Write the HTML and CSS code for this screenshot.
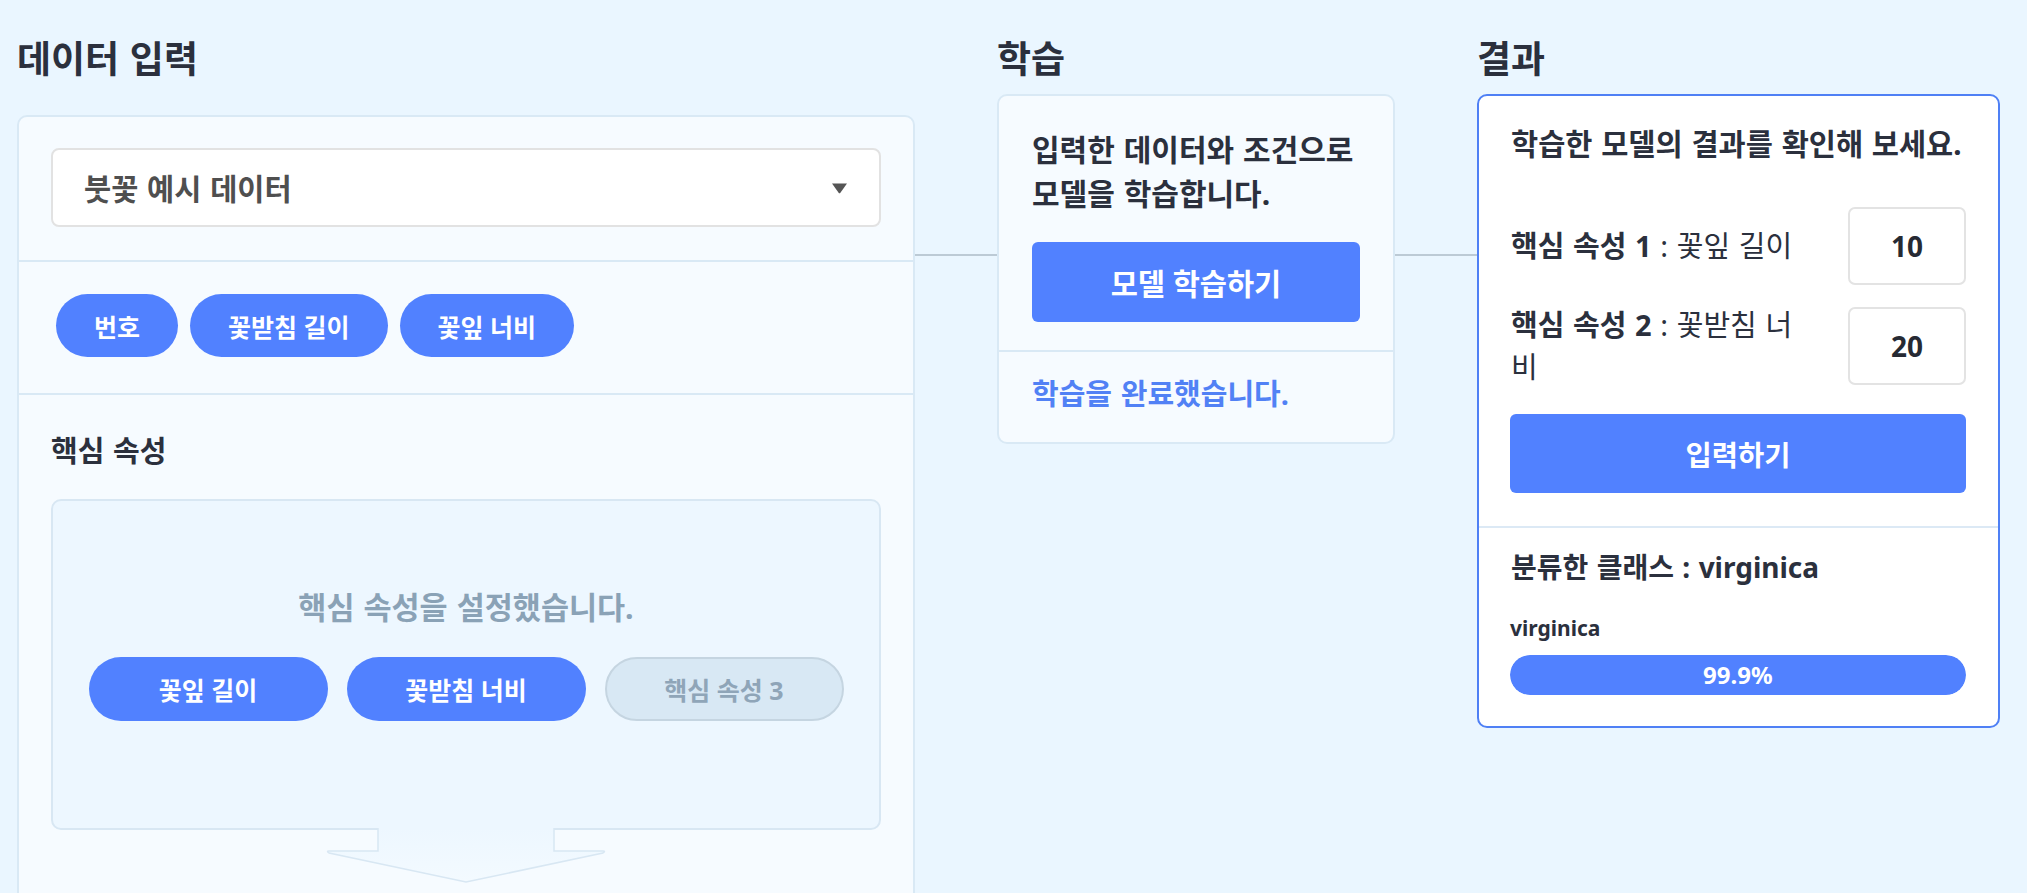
FILE: index.html
```html
<!DOCTYPE html>
<html lang="ko">
<head>
    <meta charset="UTF-8">
    <meta name="viewport" content="width=device-width, initial-scale=1.0">
    <title>붓꽃 분류 학습</title>
    <link rel="stylesheet" href="styles.css">
</head>
<body>
    <div class="page">
        <section class="column column-input">
            <h2 class="column-title">데이터 입력</h2>
            <div class="card input-card">
                <div class="card-section">
                    <div class="select-box">
                        <span>붓꽃 예시 데이터</span>
                        <svg class="select-arrow" width="17" height="12" viewBox="0 0 17 12">
                            <path d="M1 1.5h15l-6.6 9.2q-0.9 1.1-1.8 0z" fill="#555"/>
                        </svg>
                    </div>
                </div>
                <div class="card-section chip-section">
                    <div class="chip-row">
                        <button class="chip">번호</button>
                        <button class="chip">꽃받침 길이</button>
                        <button class="chip">꽃잎 너비</button>
                    </div>
                </div>
                <div class="card-section feature-section">
                    <h3 class="section-title">핵심 속성</h3>
                    <div class="feature-box">
                        <p class="feature-note">핵심 속성을 설정했습니다.</p>
                        <div class="feature-row">
                            <button class="feature-btn">꽃잎 길이</button>
                            <button class="feature-btn">꽃받침 너비</button>
                            <button class="feature-btn empty">핵심 속성 3</button>
                        </div>
                    </div>
                    <svg class="flow-arrow" width="282" height="56" viewBox="0 0 282 56">
                        <defs>
                            <linearGradient id="arrowFill" x1="0" y1="0" x2="0" y2="1">
                                <stop offset="0" stop-color="#edf7ff"/>
                                <stop offset="1" stop-color="#f3faff"/>
                            </linearGradient>
                        </defs>
                        <path d="M53 0V23H4Q1 23 4 25L141 54L278 25Q281 23 278 23H229V0Z" fill="url(#arrowFill)"/>
                        <path d="M53 0V23H4Q1 23 4 25L141 54L278 25Q281 23 278 23H229V0" fill="none" stroke="#d8e7f3" stroke-width="1.5"/>
                    </svg>
                </div>
            </div>
        </section>

        <div class="connector"></div>

        <section class="column column-train">
            <h2 class="column-title">학습</h2>
            <div class="card train-card">
                <div class="card-section">
                    <p class="train-text">입력한 데이터와 조건으로 모델을 학습합니다.</p>
                    <button class="main-btn">모델 학습하기</button>
                </div>
                <div class="card-section done-section">
                    <p class="done-text">학습을 완료했습니다.</p>
                </div>
            </div>
        </section>

        <div class="connector"></div>

        <section class="column column-result">
            <h2 class="column-title">결과</h2>
            <div class="card result-card">
                <div class="card-section result-top">
                    <p class="result-text">학습한 모델의 결과를 확인해 보세요.</p>
                    <div class="value-row">
                        <div class="value-label"><b>핵심 속성 1</b> : 꽃잎 길이</div>
                        <div class="value-input">10</div>
                    </div>
                    <div class="value-row">
                        <div class="value-label"><b>핵심 속성 2</b> : 꽃받침 너<span>비</span></div>
                        <div class="value-input">20</div>
                    </div>
                    <button class="main-btn submit-btn">입력하기</button>
                </div>
                <div class="card-section result-bottom">
                    <h3 class="class-title">분류한 클래스 : virginica</h3>
                    <div class="prob-label">virginica</div>
                    <div class="prob-bar">
                        <div class="prob-fill" style="width: 99.9%">99.9%</div>
                    </div>
                </div>
            </div>
        </section>
    </div>
</body>
</html>
```

FILE: styles.css
```css
* {
    box-sizing: border-box;
}
html, body {
    margin: 0;
    height: 100%;
    overflow: hidden;
}
body {
    font-family: "Noto Sans", "Noto Sans CJK KR", sans-serif;
    background-color: #eaf6ff;
    color: #2b303d;
    word-spacing: 0.07em;
}
p, h2, h3 {
    margin: 0;
}
button {
    font-family: inherit;
    border: none;
    cursor: pointer;
}
.page {
    display: flex;
    align-items: flex-start;
    height: 100vh;
    overflow: hidden;
    padding: 35px 27px 0 17px;
}
.column-input {
    width: 898px;
}
.column-train {
    width: 398px;
}
.column-result {
    width: 523px;
}
.column-title {
    font-size: 37px;
    line-height: 48px;
    font-weight: bold;
    margin-bottom: 11px;
}
.column-input .column-title {
    margin-bottom: 32px;
}
.connector {
    width: 82px;
    height: 2px;
    margin-top: 219px;
    background-color: #bccad5;
}
.card {
    background-color: #f6fbff;
    border: 2px solid #d9e9f5;
    border-radius: 10px;
}
.card-section + .card-section {
    border-top: 2px solid #d9e9f5;
}

/* data input */
.input-card .card-section {
    padding: 31px 32px 33px;
}
.select-box {
    display: flex;
    align-items: center;
    justify-content: space-between;
    height: 79px;
    padding: 0 31px;
    background-color: #fff;
    border: 2px solid #e2e2e2;
    border-radius: 8px;
    font-size: 29.5px;
    font-weight: bold;
    color: #4f4f4f;
}
.input-card .chip-section {
    padding: 32px 37px 36px;
}
.chip-row {
    display: flex;
    gap: 12px;
}
.chip {
    height: 63px;
    padding: 0 38px;
    border-radius: 32px;
    background-color: #5181ff;
    color: #fff;
    font-size: 25px;
    font-weight: bold;
}
.input-card .feature-section {
    padding: 36px 32px 60px;
}
.section-title {
    font-size: 29px;
    line-height: 40px;
    font-weight: bold;
    margin-bottom: 28px;
}
.feature-box {
    height: 331px;
    padding-top: 84px;
    background-color: #edf7ff;
    border: 2px solid #d8e7f3;
    border-radius: 10px;
    text-align: center;
}
.feature-note {
    font-size: 30.5px;
    line-height: 44px;
    font-weight: bold;
    color: #8aa2b6;
}
.feature-row {
    display: flex;
    justify-content: center;
    gap: 19px;
    margin-top: 28px;
}
.feature-btn {
    width: 239px;
    height: 64px;
    border-radius: 32px;
    background-color: #5181ff;
    color: #fff;
    font-size: 25px;
    font-weight: bold;
}
.feature-btn.empty {
    background-color: #d8e8f4;
    border: 2px solid #c5d5e1;
    color: #8fa5b8;
}
.flow-arrow {
    display: block;
    margin: -2px 0 0 274px;
}

/* training */
.train-card .card-section {
    padding: 32px 33px 28px;
}
.train-text {
    font-size: 30px;
    line-height: 44px;
    font-weight: bold;
}
.main-btn {
    display: block;
    width: 100%;
    height: 80px;
    margin-top: 26px;
    border-radius: 6px;
    background-color: #5181ff;
    color: #fff;
    font-size: 29.5px;
    font-weight: bold;
}
.train-card .done-section {
    padding: 21px 33px 27px;
}
.done-text {
    font-size: 29px;
    line-height: 42px;
    font-weight: bold;
    color: #5181f5;
}

/* result */
.result-card {
    background-color: #fff;
    border-color: #4f80f5;
}
.result-card .card-section + .card-section {
    border-top-color: #dce9f5;
}
.result-top {
    padding: 26px 32px 33px 31px;
}
.result-text {
    font-size: 29.5px;
    line-height: 43px;
    font-weight: bold;
    padding-left: 1px;
    margin-bottom: 42px;
}
.value-row {
    display: flex;
    align-items: center;
    gap: 36px;
}
.value-row + .value-row {
    margin-top: 19px;
}
.value-label {
    flex: 1;
    padding-left: 1px;
    font-size: 29px;
    line-height: 42px;
}
.value-input {
    width: 118px;
    height: 78px;
    display: flex;
    align-items: center;
    justify-content: center;
    border: 2px solid #e3e3e3;
    border-radius: 7px;
    font-size: 28px;
    font-weight: bold;
    color: #262a33;
}
.main-btn.submit-btn {
    height: 79px;
    margin-top: 26px;
    font-size: 28.5px;
}
.result-bottom {
    padding: 18px 32px 31px 31px;
}
.class-title {
    font-size: 28px;
    line-height: 42px;
    padding-left: 1px;
}
.prob-label {
    margin-top: 25px;
    font-size: 21px;
    line-height: 30px;
    font-weight: bold;
}
.prob-bar {
    margin-top: 12px;
    height: 40px;
    border-radius: 20px;
    background-color: #e3ecf8;
    overflow: hidden;
}
.prob-fill {
    height: 100%;
    border-radius: 20px;
    background-color: #5181ff;
    color: #fff;
    font-size: 24px;
    line-height: 40px;
    font-weight: bold;
    text-align: center;
}
```
